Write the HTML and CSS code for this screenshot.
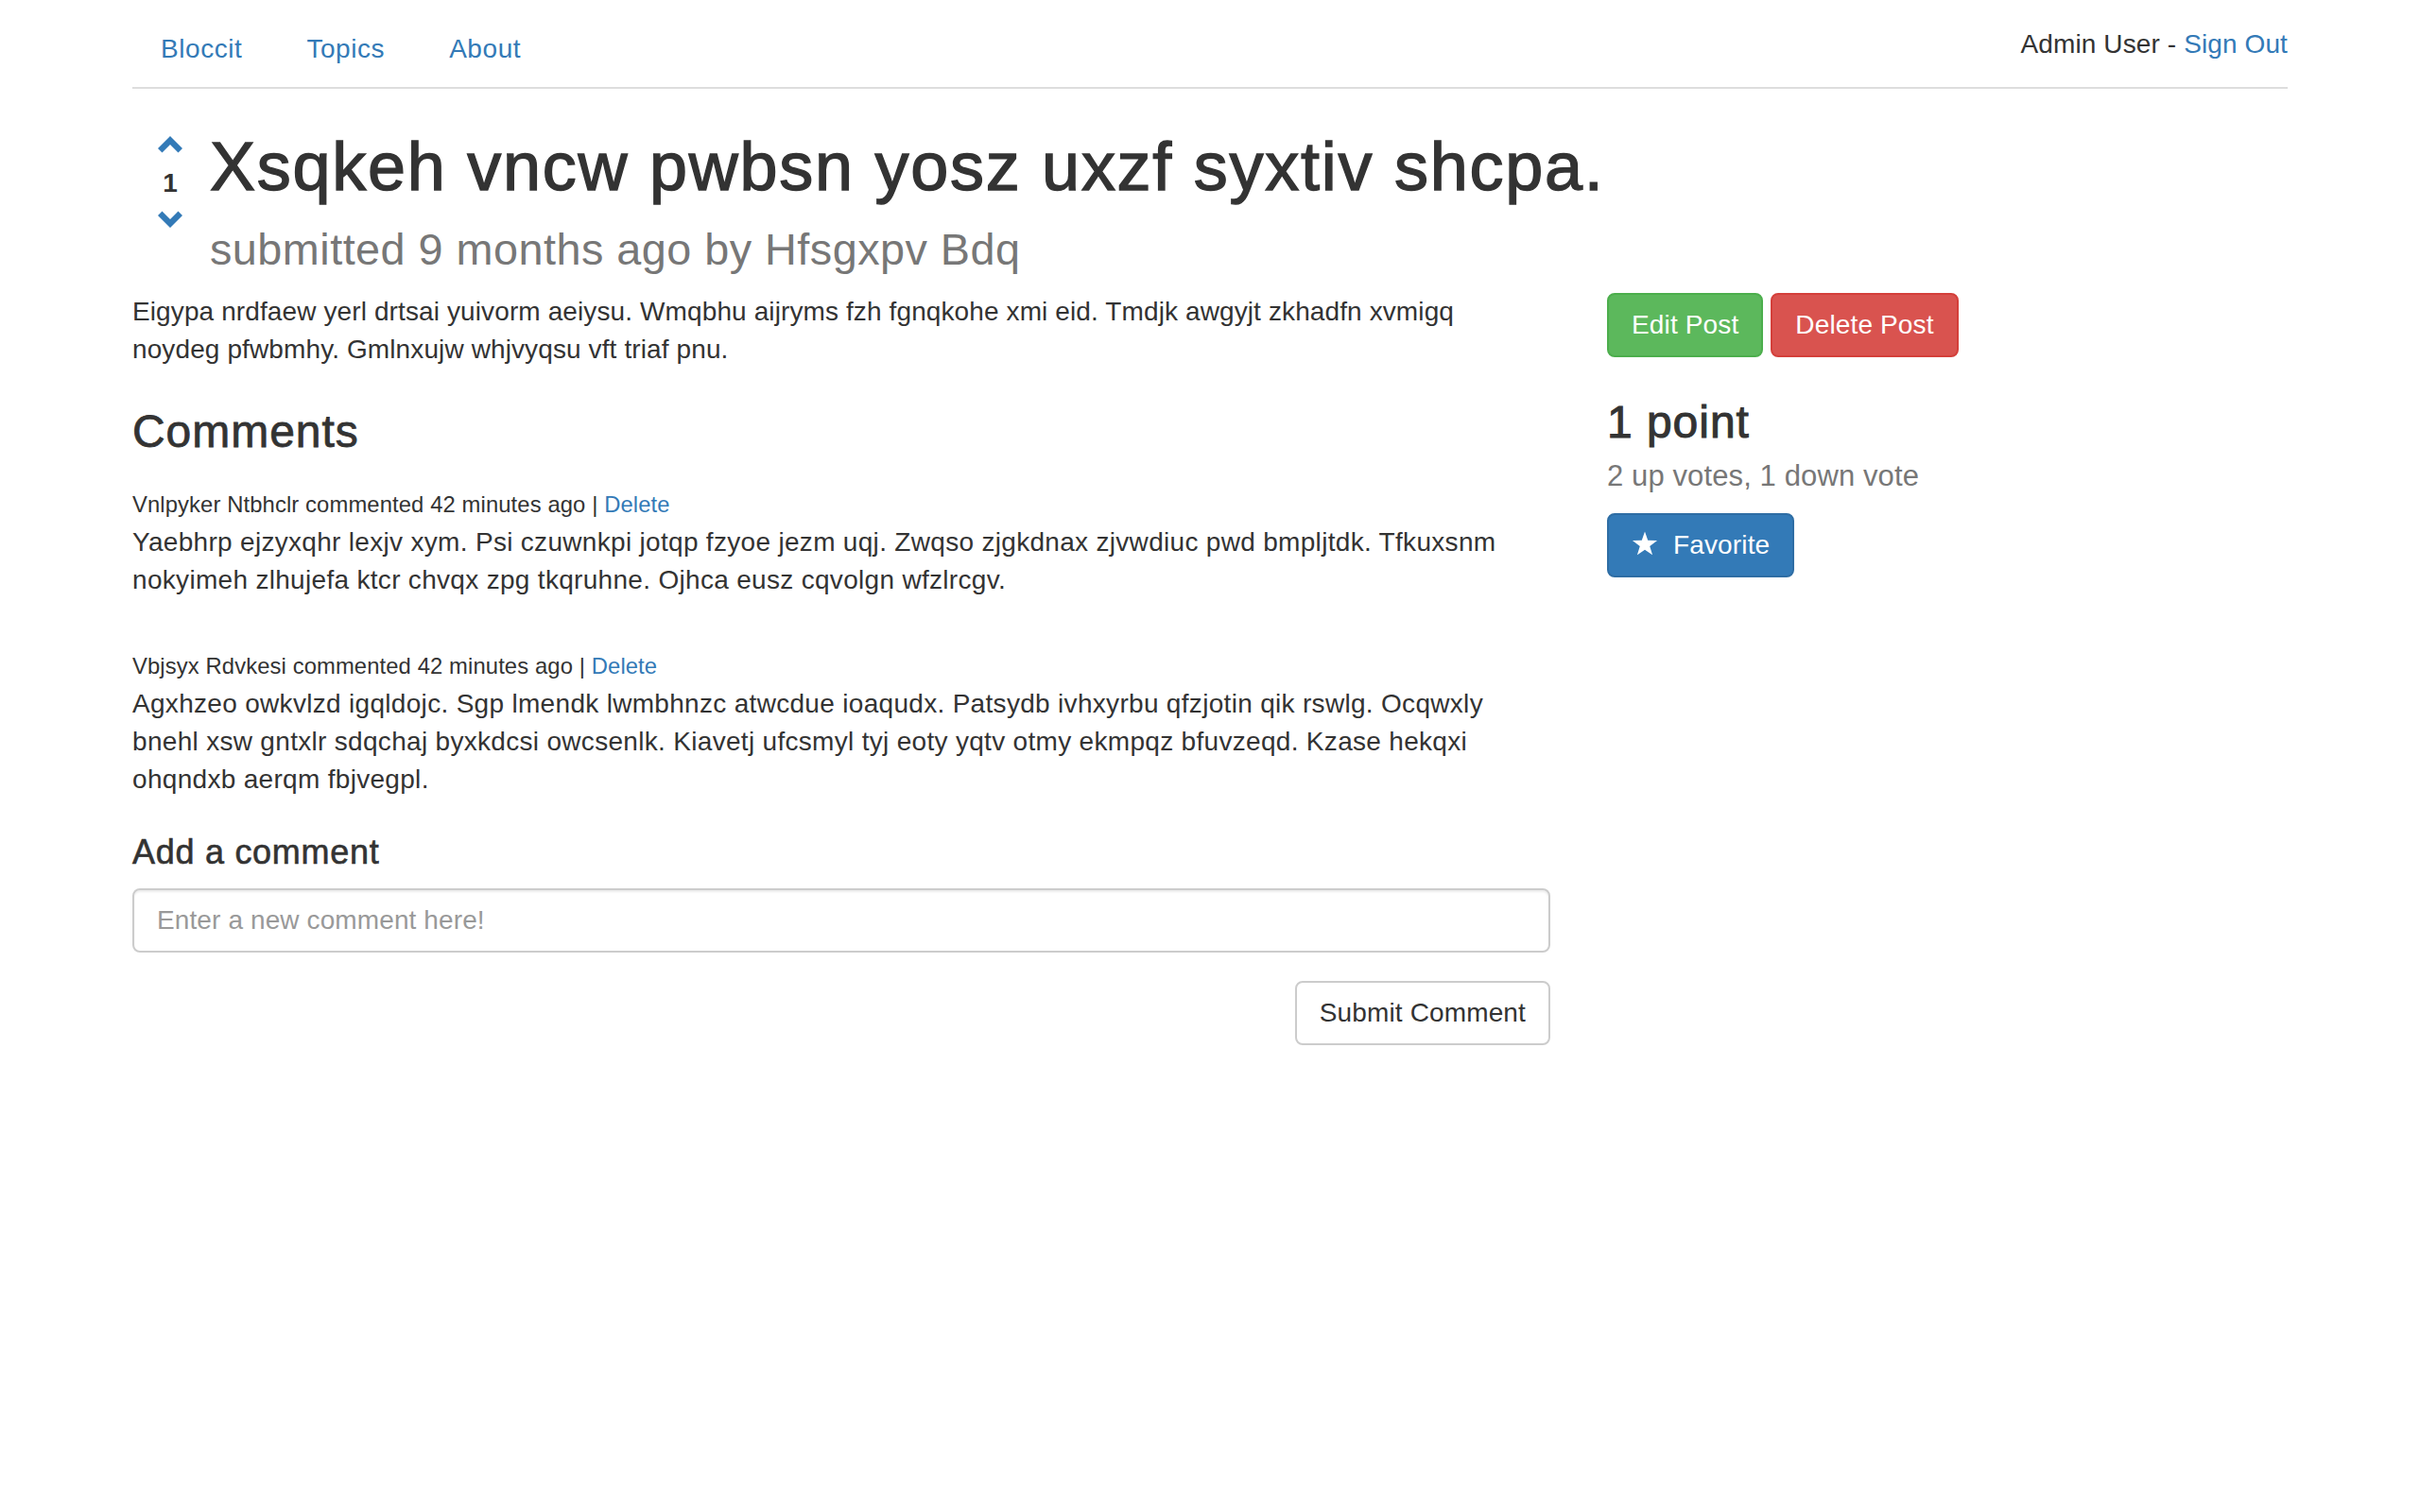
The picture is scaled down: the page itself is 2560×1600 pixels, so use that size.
FILE: index.html
```html
<!DOCTYPE html>
<html lang="en">
<head>
<meta charset="utf-8">
<title>Bloccit</title>
<link rel="stylesheet" href="styles.css">
</head>
<body>
<div class="container">
  <header class="topnav">
    <ul class="nav-links">
      <li><a href="#">Bloccit</a></li>
      <li><a href="#">Topics</a></li>
      <li><a href="#">About</a></li>
    </ul>
    <div class="user-nav">Admin User - <a href="#">Sign Out</a></div>
  </header>

  <div class="post-head">
    <div class="votes">
      <a href="#" class="vote-arrow"><svg width="26" height="18" viewBox="0 0 26 18"><polygon points="0,13 13,0 26,13 21.5,17.5 13,9 4.5,17.5" fill="#337ab7"/></svg></a>
      <strong class="vote-count">1</strong>
      <a href="#" class="vote-arrow down"><svg width="26" height="18" viewBox="0 0 26 18"><polygon points="0,5 13,18 26,5 21.5,0.5 13,9 4.5,0.5" fill="#337ab7"/></svg></a>
    </div>
    <h1 class="post-title">Xsqkeh vncw pwbsn yosz uxzf syxtiv shcpa.<br><small>submitted 9 months ago by Hfsgxpv Bdq</small></h1>
  </div>

  <div class="row">
    <div class="main-col">
      <p>Eigypa nrdfaew yerl drtsai yuivorm aeiysu. Wmqbhu aijryms fzh fgnqkohe xmi eid. Tmdjk awgyjt zkhadfn xvmigq<br>noydeg pfwbmhy. Gmlnxujw whjvyqsu vft triaf pnu.</p>

      <h3 class="comments-title">Comments</h3>

      <div class="comment">
        <div class="comment-meta"><small>Vnlpyker Ntbhclr commented 42 minutes ago | <a href="#">Delete</a></small></div>
        <p>Yaebhrp ejzyxqhr lexjv xym. Psi czuwnkpi jotqp fzyoe jezm uqj. Zwqso zjgkdnax zjvwdiuc pwd bmpljtdk. Tfkuxsnm<br>nokyimeh zlhujefa ktcr chvqx zpg tkqruhne. Ojhca eusz cqvolgn wfzlrcgv.</p>
      </div>

      <div class="comment">
        <div class="comment-meta"><small>Vbjsyx Rdvkesi commented 42 minutes ago | <a href="#">Delete</a></small></div>
        <p>Agxhzeo owkvlzd igqldojc. Sgp lmendk lwmbhnzc atwcdue ioaqudx. Patsydb ivhxyrbu qfzjotin qik rswlg. Ocqwxly<br>bnehl xsw gntxlr sdqchaj byxkdcsi owcsenlk. Kiavetj ufcsmyl tyj eoty yqtv otmy ekmpqz bfuvzeqd. Kzase hekqxi<br>ohqndxb aerqm fbjvegpl.</p>
      </div>

      <h4 class="add-title">Add a comment</h4>
      <form class="comment-form">
        <div class="form-group">
          <input class="form-control" type="text" placeholder="Enter a new comment here!">
        </div>
        <div class="form-actions">
          <button type="button" class="btn btn-default">Submit Comment</button>
        </div>
      </form>
    </div>

    <div class="side-col">
      <div class="post-actions">
        <a href="#" class="btn btn-success">Edit Post</a>
        <a href="#" class="btn btn-danger">Delete Post</a>
      </div>
      <h3 class="points">1 point</h3>
      <div class="vote-detail">2 up votes, 1 down vote</div>
      <a href="#" class="btn btn-primary btn-fav"><svg class="star" width="28" height="26" viewBox="0 0 28 26.5"><polygon points="14,0.5 17.29,9.97 27.31,10.17 19.33,16.23 22.23,25.83 14,20.1 5.77,25.83 8.67,16.23 0.69,10.17 10.71,9.97" fill="#fff"/></svg>Favorite</a>
    </div>
  </div>
</div>
</body>
</html>
```

FILE: styles.css
```css
* { box-sizing: border-box; }

html, body {
  margin: 0;
  padding: 0;
  background: #fff;
}

body {
  font-family: "Liberation Sans", Arial, Helvetica, sans-serif;
  font-size: 28px;
  line-height: 1.42857;
  color: #333;
  letter-spacing: 0.004em;
}

a {
  color: #337ab7;
  text-decoration: none;
}

.container {
  width: 2340px;
  margin: 0 auto;
  padding: 12px 30px 0;
}

/* top navigation */
.topnav {
  display: flex;
  justify-content: space-between;
  align-items: flex-start;
  border-bottom: 2px solid #ddd;
}

.nav-links {
  display: flex;
  list-style: none;
  margin: 0;
  padding: 0;
}

.nav-links li {
  margin-right: 8px;
}

.nav-links a {
  display: block;
  padding: 20px 30px;
  line-height: 40px;
  letter-spacing: 0.02em;
}

.user-nav {
  padding-top: 15px;
  line-height: 40px;
}

/* post heading */
.post-head {
  display: flex;
  align-items: flex-start;
}

.votes {
  width: 40px;
  margin: 50px 22px 0 20px;
  display: flex;
  flex-direction: column;
  align-items: center;
}

.vote-arrow {
  display: block;
  height: 18px;
  line-height: 0;
}

.vote-arrow svg {
  display: block;
}

.vote-count {
  display: block;
  margin-top: 12px;
  line-height: 40px;
  font-weight: 700;
}

.vote-arrow.down {
  margin-top: 9px;
}

h1, h3, h4 {
  font-weight: 400;
  line-height: 1.1;
  color: #333;
  letter-spacing: 0.02em;
}

.post-title {
  font-size: 72px;
  margin: 43px 0 15px;
  letter-spacing: 0.024em;
  -webkit-text-stroke: 1.4px #333;
}

.post-title small {
  font-size: 65%;
  line-height: 1;
  color: #777;
  -webkit-text-stroke: 0;
  letter-spacing: 0.01em;
}

/* two columns */
.row {
  display: flex;
  gap: 60px;
}

.main-col {
  width: 1500px;
  flex: none;
}

.side-col {
  flex: 1;
}

p {
  margin: 0 0 20px;
}

.comment p {
  letter-spacing: 0.011em;
}

.comments-title {
  font-size: 48px;
  margin: 41px 0 29px;
  -webkit-text-stroke: 0.8px #333;
}

.comment + .comment {
  margin-top: 50px;
}

.comment-meta {
  line-height: 40px;
}

.comment-meta small {
  font-size: 85%;
}

.add-title {
  font-size: 36px;
  margin: 37px 0 18px;
  -webkit-text-stroke: 0.6px #333;
}

.form-group {
  margin-bottom: 30px;
}

.form-control {
  display: block;
  width: 100%;
  height: 68px;
  padding: 12px 24px;
  font-family: inherit;
  font-size: 28px;
  line-height: 40px;
  letter-spacing: 0.004em;
  color: #555;
  background: #fff;
  border: 2px solid #ccc;
  border-radius: 8px;
  box-shadow: inset 0 2px 2px rgba(0, 0, 0, 0.075);
  outline: none;
}

.form-control::placeholder {
  color: #999;
}

.form-actions {
  display: flex;
  justify-content: flex-end;
}

/* buttons */
.btn {
  display: inline-flex;
  align-items: center;
  padding: 12px 24px;
  font-family: inherit;
  font-size: 28px;
  line-height: 40px;
  letter-spacing: 0.005em;
  border: 2px solid transparent;
  border-radius: 8px;
  cursor: pointer;
  white-space: nowrap;
}

.btn-default {
  color: #333;
  background: #fff;
  border-color: #ccc;
}

.btn-success {
  color: #fff;
  background: #5cb85c;
  border-color: #4cae4c;
}

.btn-danger {
  color: #fff;
  background: #d9534f;
  border-color: #d43f3a;
}

.btn-primary {
  color: #fff;
  background: #337ab7;
  border-color: #2e6da4;
}

.post-actions {
  display: flex;
  gap: 8px;
}

.points {
  font-size: 48px;
  margin: 43px 0 0;
  -webkit-text-stroke: 1px #333;
}

.vote-detail {
  font-size: 31px;
  line-height: 1;
  color: #777;
  margin-top: 14px;
}

.btn-fav {
  margin-top: 24px;
}

.star {
  display: block;
  margin: -4px 16px 0 0;
}
```
